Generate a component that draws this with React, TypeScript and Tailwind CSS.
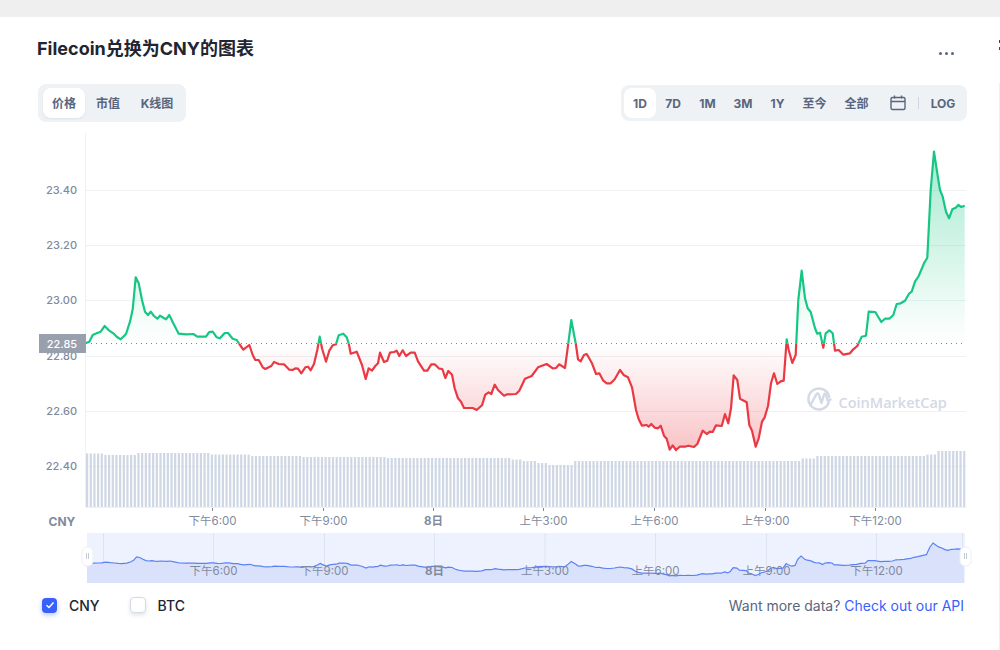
const line: [number, number][] = [
  [86, 343], [89.3, 341.7], [92.7, 335], [96.7, 333.3], [100.7, 331.7], [104.7, 326], [109.3, 330.7], [113.3, 333.3], [117.3, 337.3], [120.7, 339.3],
  [126, 334], [130, 321.7], [132.7, 309.3], [135.7, 277.3], [138.7, 283.3], [142, 300], [145, 311.7], [148, 315], [150.7, 311.7], [154, 316],
  [157.3, 318.7], [160, 315.7], [166, 319.3], [169.3, 315], [173.3, 323.3], [178.7, 333.7], [186, 334.3], [193.3, 334], [197.3, 336.7], [206, 336.7],
  [209.3, 332], [212.7, 331.7], [216.7, 337.3], [220, 338.3], [224.7, 333], [228, 333], [232.7, 338.7], [236.7, 340], [240, 345], [243.3, 349.7],
  [249.3, 345], [252.7, 355], [255.3, 360], [258.7, 360], [262.7, 367.3], [265.3, 369], [271.3, 366], [274, 362], [278.7, 364], [284, 364.3],
  [289.3, 369.7], [292.7, 370], [295.3, 368.3], [298, 368.7], [301.3, 373.3], [305.3, 367.3], [308, 366.7], [310.7, 370.3], [314, 364], [317.3, 350],
  [319.7, 336.7], [322, 348.3], [326, 361.7], [329.3, 350.7], [332.7, 345.3], [336, 344.3], [338.7, 335.3], [343.3, 333.7], [346.7, 337.3], [348.7, 343.3],
  [350.7, 353.7], [356.7, 351.7], [362, 365], [365.7, 379], [368.7, 368.3], [372, 370.7], [375.3, 366], [378, 363.3], [380, 352.7], [384, 362],
  [387.3, 360.7], [390, 352.7], [394, 352], [396.7, 350.7], [399.3, 356], [402.7, 350.3], [406, 356], [410.7, 352.7], [414.7, 352.7], [418, 361.3],
  [424, 370.7], [427.3, 370.7], [431.3, 364.3], [434.7, 364.3], [439.3, 368.7], [442.3, 369], [445.3, 378], [448.3, 371], [452, 374.7], [454.7, 388.3],
  [458, 398.3], [461, 401.7], [464, 408], [472.7, 408], [476.7, 410], [482, 405.3], [485.3, 394.7], [488.7, 392.3], [491.3, 394], [494.7, 384.7],
  [498, 390], [504, 395.7], [507.3, 394.3], [516, 394], [519.3, 390.7], [525, 378.7], [531.7, 376], [538, 367.3], [546.7, 364], [552.7, 368.3],
  [556, 368], [559.3, 364.3], [565, 368], [568.3, 343.3], [571.3, 320], [576, 345], [578, 359.3], [580.7, 361.3], [584, 355], [586.7, 354],
  [592, 363.3], [596, 374], [599.3, 373.3], [603.3, 380.7], [606.7, 383.3], [610.7, 383.3], [614.7, 379.3], [620, 370], [624, 375.3], [628, 377.3],
  [632, 387.3], [636, 410], [638.7, 419.3], [642, 425.7], [646.7, 425], [648.7, 426.7], [651.3, 424], [654.7, 427.7], [658, 428.3], [660.7, 425.7],
  [664, 435.7], [666.7, 438.7], [669.7, 449.7], [672.7, 445.3], [676, 450], [680, 446.5], [685, 446.7], [688.3, 445.7], [694, 447], [697.3, 444],
  [702.7, 430.7], [706.7, 434], [710, 431.7], [712.7, 432], [716, 425.3], [721.7, 426], [725, 414], [728.3, 423.3], [731, 408.3], [733.7, 375.3],
  [737.3, 380], [740, 398.7], [746.7, 402.3], [749.3, 425], [752, 430.7], [755.7, 446.7], [758.7, 438.3], [762, 421.7], [764.7, 417.3], [768, 406],
  [771, 383.3], [774, 373.3], [777.3, 384], [780.7, 381.3], [783.7, 380.7], [786.7, 339.3], [788.7, 350], [792.3, 363], [795.7, 355], [798.3, 300],
  [801.7, 270.7], [805, 298.3], [807.7, 308.3], [810.7, 312], [815, 328.3], [817.3, 333.7], [820, 332.7], [823.3, 347.7], [825.7, 333.3], [829.3, 330.3],
  [832.7, 333.3], [835, 350.7], [838.7, 350], [843.3, 354.7], [850, 353.3], [853.3, 349.3], [857.3, 346], [861.7, 336.7], [866, 335.7], [868.7, 311.7],
  [875.3, 312], [881.3, 322], [885, 318.7], [889.3, 318.7], [893.3, 315], [896.7, 304], [900.7, 303.3], [905, 300.7], [909.3, 293.3], [911.7, 291.7],
  [915, 281.7], [918.7, 276], [924, 263.3], [927.3, 257.7], [930.7, 190], [934, 151.7], [937.3, 173.3], [940, 190], [942.7, 196.7], [946, 211.7],
  [949, 218.3], [952.3, 209.3], [955.7, 207.7], [958.3, 205], [961.3, 207], [964.7, 205.7],
];

// bar tops by x, stepped
const barSteps: [number, number][] = [
  [104, 453.5], [135, 455], [210, 453], [250, 454.5], [300, 456], [385, 457], [510, 458], [522, 459.5], [535, 461], [548, 463], [574, 465],
  [800, 461], [815, 458.5], [925, 456], [935, 454.5], [966, 451],
];

const bars: { x: number; top: number }[] = [];
for (let x = 86; x < 965; x += 3.67) {
  const step = barSteps.find((s) => x <= s[0]);
  bars.push({ x, top: step ? step[1] : 451 });
}

const pts = line.map((p) => p.join(",")).join(" ");
const area = `86,343.5 ${pts} 964.7,343.5`;
const baseY = 343.5;

// navigator is the same series squashed into its strip
const navPts = line.map((p) => {
  const x = 87 + ((p[0] - 86) / 879) * 877;
  const y = 543 + (p[1] - 151.7) * 0.11;
  return `${x.toFixed(1)},${y.toFixed(1)}`;
});
const navLine = navPts.join(" ");
const navArea = `87,583 ${navLine} 964,583`;

const yTicks = [
  { y: 190.5, label: "23.40" },
  { y: 245.5, label: "23.20" },
  { y: 300.5, label: "23.00" },
  { y: 356.5, label: "22.80" },
  { y: 411.5, label: "22.60" },
  { y: 466.5, label: "22.40" },
];

const xTicks = [
  { x: 212.5, label: "下午6:00", navX: 213.5 },
  { x: 323.5, label: "下午9:00", navX: 324.5 },
  { x: 433.5, label: "8日", navX: 434.5, bold: true },
  { x: 543.5, label: "上午3:00", navX: 545 },
  { x: 654.5, label: "上午6:00", navX: 655.5 },
  { x: 765.5, label: "上午9:00", navX: 766.5 },
  { x: 875.5, label: "下午12:00", navX: 876.5 },
];

const fontStack = "'Inter', 'Noto Sans CJK SC', sans-serif";

function PriceChart() {
  return (
    <svg width="999" height="465" viewBox="0 133 999 465" className="block" style={{ fontFamily: fontStack }}>
      <defs>
        <linearGradient id="upFill" gradientUnits="userSpaceOnUse" x1="0" y1="151" x2="0" y2="343.5">
          <stop offset="0" stopColor="#16c784" stopOpacity="0.38" />
          <stop offset="1" stopColor="#16c784" stopOpacity="0" />
        </linearGradient>
        <linearGradient id="downFill" gradientUnits="userSpaceOnUse" x1="0" y1="343.5" x2="0" y2="450">
          <stop offset="0" stopColor="#ea3943" stopOpacity="0" />
          <stop offset="1" stopColor="#ea3943" stopOpacity="0.3" />
        </linearGradient>
        <clipPath id="aboveBase">
          <rect x="80" y="133" width="890" height={baseY - 133} />
        </clipPath>
        <clipPath id="belowBase">
          <rect x="80" y={baseY} width="890" height="160" />
        </clipPath>
      </defs>

      <line x1="85.5" y1="133" x2="85.5" y2="507" stroke="#eff2f5" />
      {yTicks.map((t) => (
        <g key={t.label}>
          <line x1="86" y1={t.y} x2="966" y2={t.y} stroke="#eff2f5" />
          <text x="77" y={t.y + 3.5} textAnchor="end" fontSize="11" fontWeight="500" fill="#808a9d">
            {t.label}
          </text>
        </g>
      ))}

      {bars.map((b) => (
        <rect key={b.x} x={b.x} y={b.top} width="2.2" height={507 - b.top} fill="#cfd6e4" />
      ))}
      <line x1="85" y1="507.5" x2="966" y2="507.5" stroke="#eff2f5" />

      <polygon points={area} fill="url(#upFill)" clipPath="url(#aboveBase)" />
      <polygon points={area} fill="url(#downFill)" clipPath="url(#belowBase)" />

      {/* watermark */}
      <g fill="none" stroke="#d3d9e6" strokeWidth="2.4" strokeLinejoin="round" strokeLinecap="round">
        <path d="M828.6 403 A10.5 10.5 0 1 1 829.2 397" />
        <path d="M810.5 405 L816.5 394 Q818 392.5 819 395 L821.5 403 L824 394.5 Q825 392.5 826 395 L828 401.5 L830.5 399.5" />
      </g>
      <text x="838.5" y="407.5" fontSize="14.5" fontWeight="600" fill="#d3d9e6" style={{ fontFamily: "'Open Sans', sans-serif" }}>
        CoinMarketCap
      </text>

      <polyline points={pts} fill="none" stroke="#16c784" strokeWidth="2.2" strokeLinejoin="round" clipPath="url(#aboveBase)" />
      <polyline points={pts} fill="none" stroke="#ea3943" strokeWidth="2.2" strokeLinejoin="round" clipPath="url(#belowBase)" />

      <line x1="86" y1={baseY} x2="966" y2={baseY} stroke="#7c8494" strokeWidth="1" strokeDasharray="1 4" />
      <rect x="39" y="334" width="47" height="19" fill="#99a0ad" />
      <text x="62" y="347.5" textAnchor="middle" fontSize="11" fontWeight="500" fill="#fff">
        22.85
      </text>

      <text x="62" y="526" textAnchor="middle" fontSize="12" fontWeight="700" fill="#808a9d">
        CNY
      </text>
      {xTicks.map((t) => (
        <g key={t.label}>
          <line x1={t.x} y1="508" x2={t.x} y2="511" stroke="#808a9d" />
          <text x={t.x} y="525" textAnchor="middle" fontSize="11.5" fontWeight={t.bold ? 700 : 400} fill="#808a9d">
            {t.label}
          </text>
        </g>
      ))}

      {/* navigator */}
      <rect x="87" y="533" width="878" height="50" fill="#eef2fe" />
      {[103.5, ...xTicks.map((t) => t.navX), 962.5].map((x) => (
        <line key={x} x1={x} y1="533" x2={x} y2="583" stroke="#dfe4f2" />
      ))}
      <polygon points={navArea} fill="#dae1fb" />
      <polyline points={navLine} fill="none" stroke="#5b82f5" strokeWidth="1.2" />
      {xTicks.map((t) => (
        <text key={t.label} x={t.navX} y="575" textAnchor="middle" fontSize="11.5" fontWeight={t.bold ? 700 : 400} fill="#808a9d">
          {t.label}
        </text>
      ))}
      <rect x="82" y="547" width="11" height="19" rx="5" fill="#fff" stroke="#eceff4" />
      <path d="M86.5 553v6M88.5 553v6" stroke="#c6ccd8" fill="none" />
      <rect x="960" y="547" width="11" height="19" rx="5" fill="#fff" stroke="#eceff4" />
      <path d="M964.5 553v6M966.5 553v6" stroke="#c6ccd8" fill="none" />
    </svg>
  );
}

export default function App() {
  return (
    <div className="w-[1000px] h-[650px] overflow-hidden bg-white font-['Inter','Noto_Sans_CJK_SC',sans-serif] text-[#222531]">
      <div className="h-[17px] bg-[#efefef]" />
      <div className="flex h-[633px]">
        <div className="w-[999px] bg-white">
          <div className="flex items-start justify-between pl-[37px] pr-[45px] pt-[20px] h-[67px]">
            <h2 className="text-[18px] leading-[24px] font-bold text-[#222531]">Filecoin兑换为CNY的图表</h2>
            <div className="flex gap-[3px] mt-[15px]">
              <span className="w-[3px] h-[3px] rounded-full bg-[#58667e]" />
              <span className="w-[3px] h-[3px] rounded-full bg-[#58667e]" />
              <span className="w-[3px] h-[3px] rounded-full bg-[#58667e]" />
            </div>
          </div>
          <div className="flex items-center justify-between pl-[38px] pr-[32px] h-[38px]">
            <div className="flex items-center h-[38px] pl-[5px] pr-[3px] rounded-lg bg-[#eff2f5] text-[12px] font-bold text-[#58667e]">
              <button className="w-[42px] h-[30px] pt-px rounded-lg bg-white shadow-[0_1px_2px_rgba(88,102,126,0.12)]">价格</button>
              <button className="w-[46px] h-[30px] pt-px">市值</button>
              <button className="w-[52px] h-[30px] pt-px">K线图</button>
            </div>
            <div className="flex items-center h-[36px] pl-[3px] rounded-lg bg-[#eff2f5] text-[12px] font-bold text-[#58667e]">
              <button className="w-[32px] h-[30px] pt-px rounded-lg bg-white">1D</button>
              <button className="w-[34px] h-[30px] pt-px">7D</button>
              <button className="w-[35px] h-[30px] pt-px">1M</button>
              <button className="w-[36px] h-[30px] pt-px">3M</button>
              <button className="w-[33px] h-[30px] pt-px">1Y</button>
              <button className="w-[41px] h-[30px] pt-px">至今</button>
              <button className="w-[43px] h-[30px] pt-px">全部</button>
              <svg className="ml-[12px]" width="16" height="16" viewBox="0 0 16 16" fill="none" stroke="#58667e" strokeWidth="1.4">
                <rect x="1" y="2.5" width="14" height="12" rx="1.5" />
                <path d="M1 6.5h14M4.5 0.5v3M11.5 0.5v3" />
              </svg>
              <span className="ml-[12px] w-px h-[12px] bg-[#cfd6e4]" />
              <button className="w-[48px] h-[30px] pt-px">LOG</button>
            </div>
          </div>
          <div className="mt-[11px]">
            <PriceChart />
          </div>
          <div className="flex items-center justify-between pl-[42px] pr-[35px] -mt-[2px] h-[18px]">
            <div className="flex items-center text-[14px] font-medium text-[#222531]">
              <span className="flex items-center justify-center w-[15px] h-[15px] rounded-[4px] bg-[#3861fb] shadow-[0_2px_5px_rgba(56,97,251,0.35)]">
                <svg width="10" height="10" viewBox="0 0 10 10" fill="none" stroke="#fff" strokeWidth="1.5">
                  <path d="M1.5 5.2 L4 7.5 L8.5 2.5" />
                </svg>
              </span>
              <span className="ml-[12px]">CNY</span>
              <span className="ml-[30px] w-[16px] h-[16px] rounded-[4px] bg-white border border-[#d5dbe6] shadow-[0_2px_4px_rgba(88,102,126,0.18)]" />
              <span className="ml-[12px]">BTC</span>
            </div>
            <div className="text-[14px] text-[#58667e]">
              Want more data? <a className="text-[#3861fb]">Check out our API</a>
            </div>
          </div>
        </div>
        <div className="w-px flex flex-col pt-[23px]">
          <span className="h-[3px] bg-[#6b3a10]" />
          <span className="h-[3px] mt-[4px] bg-[#6b3a10]" />
          <span className="flex-1 mt-[33px] bg-[#f0f0f0]" />
        </div>
      </div>
    </div>
  );
}
